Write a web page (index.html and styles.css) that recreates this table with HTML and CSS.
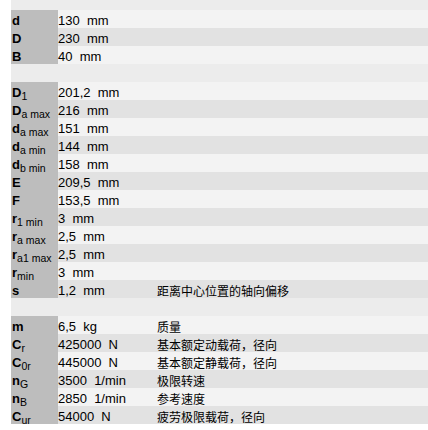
FILE: index.html
```html
<!DOCTYPE html>
<html>
<head>
<meta charset="utf-8">
<link rel="stylesheet" href="styles.css">
</head>
<body>
<table class="spec">
<colgroup><col class="c1"><col class="c2"><col class="c3"></colgroup>
<tr class="gap top"><td colspan="3"></td></tr>
<tr class="lt"><th>d</th><td class="v">130&nbsp; mm</td><td class="c"></td></tr>
<tr class="dk"><th>D</th><td class="v">230&nbsp; mm</td><td class="c"></td></tr>
<tr class="lt"><th>B</th><td class="v">40&nbsp; mm</td><td class="c"></td></tr>
<tr class="gap"><td colspan="3"></td></tr>
<tr class="lt"><th>D<sub>1</sub></th><td class="v">201,2&nbsp; mm</td><td class="c"></td></tr>
<tr class="dk"><th>D<sub>a max</sub></th><td class="v">216&nbsp; mm</td><td class="c"></td></tr>
<tr class="lt"><th>d<sub>a max</sub></th><td class="v">151&nbsp; mm</td><td class="c"></td></tr>
<tr class="dk"><th>d<sub>a min</sub></th><td class="v">144&nbsp; mm</td><td class="c"></td></tr>
<tr class="lt"><th>d<sub>b min</sub></th><td class="v">158&nbsp; mm</td><td class="c"></td></tr>
<tr class="dk"><th>E</th><td class="v">209,5&nbsp; mm</td><td class="c"></td></tr>
<tr class="lt"><th>F</th><td class="v">153,5&nbsp; mm</td><td class="c"></td></tr>
<tr class="dk"><th>r<sub>1 min</sub></th><td class="v">3&nbsp; mm</td><td class="c"></td></tr>
<tr class="lt"><th>r<sub>a max</sub></th><td class="v">2,5&nbsp; mm</td><td class="c"></td></tr>
<tr class="dk"><th>r<sub>a1 max</sub></th><td class="v">2,5&nbsp; mm</td><td class="c"></td></tr>
<tr class="lt"><th>r<sub>min</sub></th><td class="v">3&nbsp; mm</td><td class="c"></td></tr>
<tr class="dk"><th>s</th><td class="v">1,2&nbsp; mm</td><td class="c">距离中心位置的轴向偏移</td></tr>
<tr class="gap"><td colspan="3"></td></tr>
<tr class="lt"><th>m</th><td class="v">6,5&nbsp; kg</td><td class="c">质量</td></tr>
<tr class="dk"><th>C<sub>r</sub></th><td class="v">425000&nbsp; N</td><td class="c">基本额定动载荷，径向</td></tr>
<tr class="lt"><th>C<sub>0r</sub></th><td class="v">445000&nbsp; N</td><td class="c">基本额定静载荷，径向</td></tr>
<tr class="dk"><th>n<sub>G</sub></th><td class="v">3500&nbsp; 1/min</td><td class="c">极限转速</td></tr>
<tr class="lt"><th>n<sub>B</sub></th><td class="v">2850&nbsp; 1/min</td><td class="c">参考速度</td></tr>
<tr class="dk"><th>C<sub>ur</sub></th><td class="v">54000&nbsp; N</td><td class="c">疲劳极限载荷，径向</td></tr>
</table>
</body>
</html>
```
FILE: styles.css
```css
html, body {
  margin: 0;
  padding: 0;
  background: #ffffff;
}
.spec {
  margin-left: 11px;
  width: 417px;
  border-collapse: collapse;
  border-spacing: 0;
  table-layout: fixed;
  font-family: "Liberation Sans", Arial, "Noto Sans CJK SC", sans-serif;
  font-size: 13px;
  color: #000;
}
.c1 { width: 47px; }
.c2 { width: 99px; }
.spec tr {
  height: 18px;
}
.spec th, .spec td {
  padding: 3px 0 0 0;
  height: 15px;
  line-height: 15px;
  vertical-align: top;
  white-space: nowrap;
}
.spec th {
  padding-left: 1px;
  text-align: left;
  font-weight: bold;
  background: #bdbdbd;
}
.spec td.c {
  font-family: "Noto Sans CJK SC", sans-serif;
  font-size: 12px;
  overflow: hidden;
}
.spec sub {
  font-size: 10.5px;
  font-weight: normal;
  line-height: 0;
  vertical-align: -3px;
}
.lt { background: #f3f3f3; }
.dk { background: #e2e2e2; }
.gap { background: #ececec; }
.gap td { padding: 0; height: 18px; }
.gap.top { height: 10px; }
.gap.top td { height: 10px; }
```
